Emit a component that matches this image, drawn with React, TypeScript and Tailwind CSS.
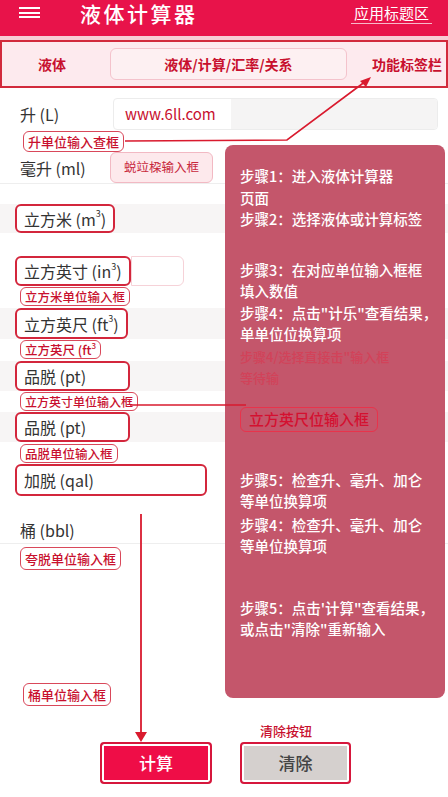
import React from "react";

const font = { fontFamily: '"Noto Sans CJK SC", "Noto Sans", sans-serif' };

const redBox =
  "flex items-center rounded-md border-2 border-[#d3263c] bg-white px-[7px] text-[16px] text-[#333]";
const note =
  "flex h-[19px] items-center rounded-md border border-[#d9485a] bg-white px-[4px] text-[12.5px] leading-[17px] font-medium text-[#c8102e]";

function Row({ children, className = "" }: { children: React.ReactNode; className?: string }) {
  return <div className={`flex bg-[#f7f5f5] ${className}`}>{children}</div>;
}

const steps: string[][] = [
  ["步骤1：进入液体计算器", "页面", "步骤2：选择液体或计算标签"],
  ["步骤3：在对应单位输入框框", "填入数值", "步骤4：点击\"计乐\"查看结果，", "单单位位换算项"],
];

export default function App() {
  return (
    <div className="relative h-[797px] w-[448px] overflow-hidden bg-white" style={font}>
      {/* header */}
      <div className="flex h-[36px] items-start bg-[#e8134a] text-white">
        <div className="ml-[19px] mt-[7px] flex w-[21px] flex-col gap-[2.5px]">
          <span className="h-[2px] bg-white" />
          <span className="h-[2px] bg-white" />
          <span className="h-[2px] bg-white" />
        </div>
        <div className="ml-[40px] text-[21px] font-medium leading-[26px] tracking-[2.5px]">液体计算器</div>
        <div className="ml-auto mr-[16px] mt-[2px] border-b border-white/70 px-[3px] text-[15px] leading-[21px]">
          应用标题区
        </div>
      </div>
      <div className="h-[4px] bg-[#f7cdd5]" />
      {/* tab bar */}
      <div className="flex h-[48px] items-center border-2 border-[#d22a3c] bg-[#fdeaee] text-[14px] font-bold text-[#c8102e]">
        <div className="ml-[36px] w-[40px]">液体</div>
        <div className="ml-[32px] flex h-[32px] w-[237px] items-center justify-center rounded-md border border-[#f4c3cc] bg-[#fdf0f2]">
          液体/计算/汇率/关系
        </div>
        <div className="ml-[25px] whitespace-nowrap">功能标签栏</div>
      </div>

      {/* form rows */}
      <div className="flex flex-col">
        <Row className="mt-[10px] h-[32px] items-center bg-white">
          <div className="ml-[20px] w-[93px] text-[16px] text-[#333]">升 (L)</div>
          <div className="flex h-[32px] w-[325px] overflow-hidden rounded-sm border border-[#ececec]">
            <div className="flex w-[117px] items-center pl-[11px] text-[15px] text-[#c8102e]">www.6ll.com</div>
            <div className="flex-1 bg-[#f5f4f4]" />
          </div>
        </Row>
        <div className="ml-[23px] mt-[1px] flex">
          <span className={`${note} h-[21px] text-[13px]`}>升单位输入查框</span>
        </div>
        <Row className="h-[32px] items-center border-b border-[#eee] bg-white">
          <div className="ml-[20px] w-[90px] text-[16px] text-[#333]">毫升 (ml)</div>
          <div className="flex h-[31px] w-[103px] items-center justify-center rounded-md border border-[#f2b9c3] bg-[#fde9ec] text-[12.5px] text-[#c8283c]">
            蜕竝桗输入框
          </div>
        </Row>
        <Row className="mt-[20px] h-[29px]">
          <div className={`${redBox} ml-[15px] h-[29px]`}>
            立方米 (m<sup className="text-[9px]">3</sup>)
          </div>
        </Row>
        <Row className="mt-[23px] h-[30px] bg-white">
          <div className={`${redBox} ml-[15px] h-[30px]`}>
            立方英寸 (in<sup className="text-[9px]">3</sup>)
          </div>
          <div className="h-[30px] w-[53px] rounded-r-md border border-[#f6d2d8]" />
        </Row>
        <div className="ml-[20px] mt-[1px] flex">
          <span className={note}>立方米单位输入框</span>
        </div>
        <Row className="mt-[2px] h-[31px]">
          <div className={`${redBox} ml-[15px] h-[31px]`}>
            立方英尺 (ft<sup className="text-[9px]">3</sup>)
          </div>
        </Row>
        <div className="ml-[20px] mt-[1px] flex">
          <span className={note}>
            立方英尺 (ft<sup className="text-[8px]">3</sup>
          </span>
        </div>
        <Row className="mt-[2px] h-[30px]">
          <div className={`${redBox} ml-[15px] h-[30px] w-[115px]`}>品脱 (pt)</div>
        </Row>
        <div className="ml-[20px] mt-[1px] flex">
          <span className={`${note} text-[12px]`}>立方英寸单位输入框</span>
        </div>
        <Row className="mt-[1px] h-[30px]">
          <div className={`${redBox} ml-[15px] h-[30px] w-[115px]`}>品脱 (pt)</div>
        </Row>
        <div className="ml-[20px] mt-[2px] flex">
          <span className={note}>品脱单位输入框</span>
        </div>
        <Row className="mt-[1px] h-[32px] bg-white">
          <div className={`${redBox} ml-[15px] h-[32px] w-[192px] border`}>加脱 (qal)</div>
        </Row>
        <div className="mt-[22px] h-[26px] border-b border-[#eee] pl-[20px] text-[16px] leading-[24px] text-[#333]">
          桶 (bbl)
        </div>
        <div className="ml-[20px] mt-[3px] flex">
          <span className={`${note} h-[23px] text-[13px]`}>夸脱单位输入框</span>
        </div>
        <div className="ml-[23px] mt-[113px] flex">
          <span className={`${note} h-[23px] text-[13px]`}>桶单位输入框</span>
        </div>
        <div className="ml-[260px] mt-[16px] text-[13px] font-medium leading-[18px] text-[#c8102e]">清除按钮</div>
        <div className="mt-[2px] flex">
          <button
            type="button"
            className="ml-[100px] flex h-[42px] w-[112px] items-center justify-center rounded-sm border-2 border-[#d6173c] bg-[#ef0d47] text-[17px] font-medium text-white shadow-[inset_0_0_0_2px_#ffffff]"
          >
            计算
          </button>
          <button
            type="button"
            className="ml-[28px] flex h-[42px] w-[111px] items-center justify-center rounded-sm border-2 border-[#d6173c] bg-[#d5d0ce] text-[17px] font-medium text-[#444] shadow-[inset_0_0_0_2px_#ffffff]"
          >
            清除
          </button>
        </div>
      </div>

      {/* steps overlay panel */}
      <div className="absolute left-[225px] top-[145px] flex h-[553px] w-[220px] flex-col rounded-lg bg-[#c4566b] pl-[15px] pr-[6px] pt-[20px] text-[14.5px] font-medium leading-[21.5px] text-white">
        {steps.map((group, i) => (
          <div key={i} className={i === 1 ? "mt-[29px]" : ""}>
            {group.map((s) => (
              <div key={s} className="whitespace-nowrap">
                {s}
              </div>
            ))}
          </div>
        ))}
        <div className="mt-[1px] text-[13px] leading-[21px] text-[#d83a52] opacity-70">
          <div>步骤4/选择直接击"输入框</div>
          <div>等待输</div>
        </div>
        <div className="mt-[19px] flex">
          <span className="flex h-[25px] items-center rounded-md border border-[#e8334b] px-[8px] text-[15px] text-[#d41030]">
            立方英尺位输入框
          </span>
        </div>
        <div className="mt-[37px]">
          <div className="whitespace-nowrap">步骤5：检查升、毫升、加仑</div>
          <div>等单位换算项</div>
          <div className="mt-[2px] whitespace-nowrap">步骤4：检查升、毫升、加仑</div>
          <div>等单位换算项</div>
        </div>
        <div className="mt-[40px]">
          <div className="whitespace-nowrap">步骤5：点击'计算"查看结果，</div>
          <div className="whitespace-nowrap">或点击"清除"重新输入</div>
        </div>
      </div>

      {/* annotation arrows */}
      <svg className="pointer-events-none absolute left-0 top-0" width="448" height="797">
        <polyline points="125,141 287,140 366,81" fill="none" stroke="#d91a2e" strokeWidth="1.6" />
        <polygon points="371,77 360,81 366,87" fill="#d91a2e" />
        <line x1="130" y1="405" x2="246" y2="405" stroke="#d91a2e" strokeWidth="1.6" />
        <line x1="141" y1="514" x2="141" y2="734" stroke="#d91a2e" strokeWidth="1.8" />
        <polygon points="135,732 147,732 141,742" fill="#d91a2e" />
      </svg>
    </div>
  );
}
